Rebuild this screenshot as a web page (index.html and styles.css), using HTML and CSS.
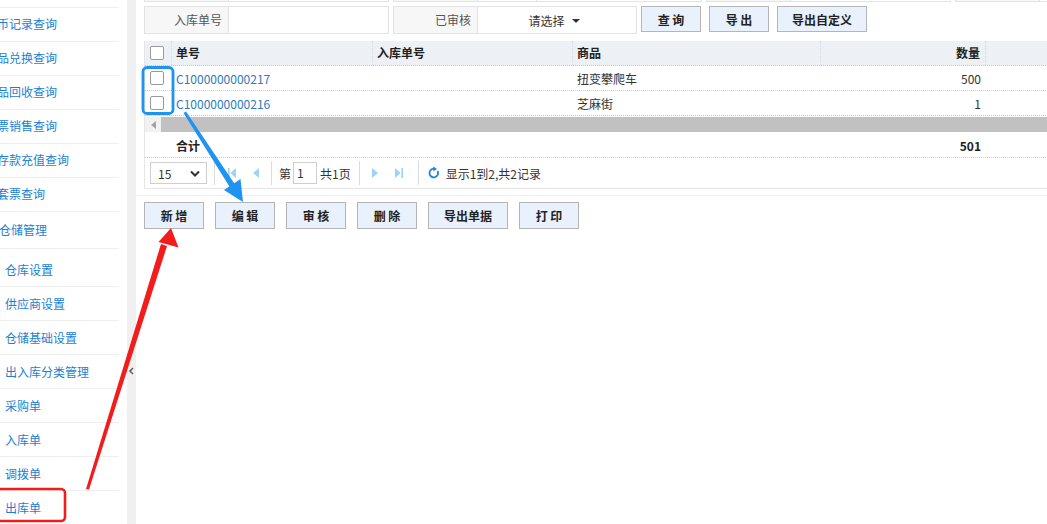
FILE: index.html
```html
<!DOCTYPE html>
<html lang="zh-CN">
<head>
<meta charset="utf-8">
<title>出库单</title>
<link rel="stylesheet" href="styles.css">
</head>
<body>
<div class="layout">
  <aside class="sidebar">
    <ul class="menu">
      <li class="menu-ghost"></li>
      <li class="menu-item cut">币记录查询</li>
      <li class="menu-item cut">品兑换查询</li>
      <li class="menu-item cut">品回收查询</li>
      <li class="menu-item cut">票销售查询</li>
      <li class="menu-item cut">存款充值查询</li>
      <li class="menu-item cut">套票查询</li>
      <li class="menu-group">仓储管理</li>
      <li class="submenu-wrap">
        <ul class="submenu">
          <li class="sub-item">仓库设置</li>
          <li class="sub-item">供应商设置</li>
          <li class="sub-item">仓储基础设置</li>
          <li class="sub-item">出入库分类管理</li>
          <li class="sub-item">采购单</li>
          <li class="sub-item">入库单</li>
          <li class="sub-item">调拨单</li>
          <li class="sub-item">出库单</li>
        </ul>
      </li>
    </ul>
  </aside>
  <div class="splitter">
    <svg class="collapse" width="5" height="8" viewBox="0 0 5 8"><polyline points="4,1 1,4 4,7" fill="none" stroke="#666" stroke-width="1.6"/></svg>
  </div>
  <main class="main">
    <div class="form">
      <div class="form-row">
        <div class="field"><span class="f-label">&nbsp;</span><span class="f-input w160"></span></div>
        <div class="field"><span class="f-label">&nbsp;</span><span class="f-input w59"></span><span class="f-input w165"></span></div>
        <div class="field"><span class="f-label">&nbsp;</span><span class="f-input w160"></span></div>
        <div class="field"><span class="f-label">&nbsp;</span><span class="f-input w160"></span></div>
      </div>
      <div class="form-row">
        <div class="field"><span class="f-label">入库单号</span><span class="f-input w160"></span></div>
        <div class="field"><span class="f-label">已审核</span><span class="f-select"><span>请选择</span><i class="caret"></i></span></div>
        <button class="btn w60">查 询</button>
        <button class="btn w60 ml4">导 出</button>
        <button class="btn w90 ml4">导出自定义</button>
      </div>
    </div>

    <div class="grid">
      <div class="g-row g-head">
        <div class="g-cell cb"><span class="checkbox"></span></div>
        <div class="g-cell">单号</div>
        <div class="g-cell">入库单号</div>
        <div class="g-cell">商品</div>
        <div class="g-cell num">数量</div>
        <div class="g-cell rest"></div>
      </div>
      <div class="g-row">
        <div class="g-cell cb"><span class="checkbox"></span></div>
        <div class="g-cell link">C1000000000217</div>
        <div class="g-cell"></div>
        <div class="g-cell">扭变攀爬车</div>
        <div class="g-cell num">500</div>
        <div class="g-cell rest"></div>
      </div>
      <div class="g-row">
        <div class="g-cell cb"><span class="checkbox"></span></div>
        <div class="g-cell link">C1000000000216</div>
        <div class="g-cell"></div>
        <div class="g-cell">芝麻街</div>
        <div class="g-cell num">1</div>
        <div class="g-cell rest"></div>
      </div>
      <div class="hscroll">
        <span class="hs-arrow"><svg width="5" height="8" viewBox="0 0 5 8"><path d="M5 0 L0 4 L5 8Z" fill="#a3a3a3"/></svg></span>
        <span class="hs-thumb"></span>
      </div>
      <div class="g-row g-foot">
        <div class="g-cell cb"></div>
        <div class="g-cell">合计</div>
        <div class="g-cell"></div>
        <div class="g-cell"></div>
        <div class="g-cell num">501</div>
        <div class="g-cell rest"></div>
      </div>
      <div class="pager">
        <div class="page-size"><span>15</span><svg width="10" height="7" viewBox="0 0 10 7"><polyline points="1,1.5 5,5.5 9,1.5" fill="none" stroke="#333" stroke-width="2"/></svg></div>
        <span class="pager-sep"></span>
        <span class="pager-btn ml5"><svg width="8" height="10" viewBox="0 0 8 10"><rect x="0" y="0" width="1.6" height="10" fill="#9fd2f5"/><path d="M8 0 L2.4 5 L8 10Z" fill="#9fd2f5"/></svg></span>
        <span class="pager-btn"><svg width="6" height="10" viewBox="0 0 6 10"><path d="M6 0 L0 5 L6 10Z" fill="#9fd2f5"/></svg></span>
        <span class="pager-sep ml3"></span>
        <span class="pager-text ml7">第</span>
        <span class="page-input">1</span>
        <span class="pager-text ml3">共1页</span>
        <span class="pager-sep ml8"></span>
        <span class="pager-btn ml3"><svg width="6" height="10" viewBox="0 0 6 10"><path d="M0 0 L6 5 L0 10Z" fill="#9fd2f5"/></svg></span>
        <span class="pager-btn"><svg width="8" height="10" viewBox="0 0 8 10"><path d="M0 0 L5.6 5 L0 10Z" fill="#9fd2f5"/><rect x="6.4" y="0" width="1.6" height="10" fill="#9fd2f5"/></svg></span>
        <span class="pager-sep ml4"></span>
        <span class="pager-btn ml3"><svg width="12" height="12" viewBox="0 0 12 12"><path d="M9.6 4 A4.3 4.3 0 1 1 6 1.7" fill="none" stroke="#1f86d6" stroke-width="1.8"/><path d="M5.2 -0.6 L9 1.9 L5.4 4.3Z" fill="#1f86d6"/></svg></span>
        <span class="pager-text">显示1到2,共2记录</span>
      </div>
    </div>

    <div class="toolbar">
      <button class="btn w60">新 增</button>
      <button class="btn w60">编 辑</button>
      <button class="btn w60">审 核</button>
      <button class="btn w60">删 除</button>
      <button class="btn w80">导出单据</button>
      <button class="btn w60">打 印</button>
    </div>
  </main>
</div>

<svg class="overlay" width="1047" height="524" viewBox="0 0 1047 524">
  <rect x="-3" y="489" width="68" height="32" rx="4" fill="none" stroke="#f21c1c" stroke-width="2.6"/>
  <polygon points="86,489 89,489.6 167,246 161,244" fill="#f21c1c"/>
  <polygon points="171,228 178.5,247.5 158.5,242" fill="#f21c1c"/>
  <rect x="143" y="67.5" width="30" height="46" rx="4" fill="none" stroke="#1e93f2" stroke-width="2.8"/>
  <polygon points="183.5,113 186,111.6 236,186 231,189" fill="#1e93f2"/>
  <polygon points="243,202 224,190 240.5,179" fill="#1e93f2"/>
</svg>
</body>
</html>
```

FILE: styles.css
```css
* { box-sizing: border-box; }
html, body { margin: 0; padding: 0; }
body {
  width: 1047px;
  height: 524px;
  overflow: hidden;
  position: relative;
  background: #fff;
  font-family: "Noto Sans CJK SC", "Microsoft YaHei", sans-serif;
  font-size: 12px;
  color: #333;
}
.layout { display: flex; height: 524px; }

/* sidebar */
.sidebar {
  width: 127px;
  flex-shrink: 0;
  padding-right: 8px;
  overflow: hidden;
  background: #fff;
}
.menu, .submenu { list-style: none; margin: 0; padding: 0; }
.menu-ghost { height: 8px; border-bottom: 1px solid #efefef; }
.menu-item {
  height: 34px;
  line-height: 31px;
  border-bottom: 1px solid #efefef;
  color: #1b7fd4;
  white-space: nowrap;
}
.menu-item.cut { text-indent: -3px; }
.menu-group {
  height: 37px;
  line-height: 36px;
  border-bottom: 1px solid #efefef;
  color: #1b7fd4;
  text-indent: -1px;
  white-space: nowrap;
}
.submenu { padding-top: 4px; }
.sub-item {
  height: 34px;
  line-height: 33px;
  border-bottom: 1px solid #efefef;
  color: #1b7fd4;
  padding-left: 5px;
  white-space: nowrap;
}

.splitter {
  width: 9px;
  flex-shrink: 0;
  background: #f0f0f0;
  display: flex;
  justify-content: center;
  align-items: flex-start;
  padding-top: 367px;
}

/* main */
.main {
  flex: 1;
  min-width: 0;
  overflow: hidden;
  padding-left: 8px;
}
.form { margin-top: -26px; display: flex; flex-direction: column; gap: 4px; }
.form-row { display: flex; gap: 4px; height: 28px; align-items: flex-start; }
.field { display: flex; height: 28px; flex-shrink: 0; }
.f-label {
  width: 85px;
  height: 28px;
  background: #f7f7f7;
  border: 1px solid #e3e3e3;
  color: #555;
  text-align: right;
  padding-right: 6px;
  line-height: 26px;
}
.f-input, .f-select {
  height: 28px;
  border: 1px solid #e3e3e3;
  border-left: none;
  background: #fff;
}
.w160 { width: 160px; }
.w59 { width: 59px; }
.w165 { width: 165px; }
.f-select {
  width: 159px;
  display: flex;
  align-items: center;
  justify-content: center;
  gap: 7px;
  color: #333;
  padding-right: 6px;
}
.caret {
  width: 0;
  height: 0;
  border-left: 4px solid transparent;
  border-right: 4px solid transparent;
  border-top: 4px solid #333;
  margin-top: 1px;
}

.btn {
  height: 26px;
  flex-shrink: 0;
  background: #e9f1fc;
  border: 1px solid #b5b5b5;
  border-radius: 0;
  font-family: inherit;
  font-size: 12px;
  font-weight: bold;
  color: #222;
  padding: 0;
  white-space: pre;
  cursor: pointer;
}
.w60 { width: 60px; }
.w80 { width: 80px; }
.w90 { width: 90px; }
.ml4 { margin-left: 4px; }

/* grid */
.grid {
  margin-top: 7px;
  border-left: 1px solid #e6e6e6;
  width: 1100px;
}
.g-row {
  display: grid;
  grid-template-columns: 27px 201px 200px 248px 165px 1fr;
  height: 25px;
  border-bottom: 1px dotted #c8c8c8;
  align-items: center;
}
.g-head { background: #edf1f6; height: 25px; }
.g-head .g-cell { border-right: 1px dotted #d3d9e1; font-weight: bold; color: #222; height: 24px; line-height: 24px; }
.g-head .g-cell.rest { border-right: none; }
.g-cell { padding: 0 4px; white-space: nowrap; overflow: hidden; }
.g-cell.num { text-align: right; padding-right: 5px; }
.g-cell.cb { padding: 0 0 0 5px; display: flex; align-items: center; }
.g-cell.link { color: #2d7bc0; }
.checkbox {
  width: 14px;
  height: 14px;
  border: 1px solid #9a9a9a;
  border-radius: 2px;
  background: #fff;
  display: block;
}

.hscroll {
  margin-top: 1px;
  height: 15px;
  display: flex;
}
.hs-arrow {
  width: 16px;
  background: #f1f1f1;
  display: flex;
  align-items: center;
  justify-content: center;
}
.hs-thumb { flex: 1; background: #c1c1c1; }

.g-foot { margin-top: 1px; height: 25px; }
.g-foot .g-cell { font-weight: bold; color: #222; }

.pager {
  height: 31px;
  border-bottom: 1px solid #e6e6e6;
  display: flex;
  align-items: center;
  padding-left: 5px;
}
.page-size {
  width: 57px;
  height: 22px;
  border: 1px solid #cfcfcf;
  display: flex;
  align-items: center;
  justify-content: space-between;
  padding: 0 6px 0 7px;
  color: #333;
}
.pager-sep {
  width: 1px;
  height: 24px;
  background: #dcdcdc;
  margin-left: 7px;
}
.pager-btn {
  width: 24px;
  height: 22px;
  display: flex;
  align-items: center;
  justify-content: center;
}
.pager-text { color: #333; white-space: nowrap; }
.page-input {
  width: 24px;
  height: 22px;
  border: 1px solid #cfcfcf;
  margin-left: 2px;
  padding-left: 3px;
  line-height: 20px;
  color: #333;
}
.ml3 { margin-left: 3px; }
.ml5 { margin-left: 5px; }
.ml7 { margin-left: 7px; }
.ml8 { margin-left: 8px; }

.toolbar {
  margin-top: 6px;
  margin-left: -8px;
  padding: 6px 0 0 8px;
  border-top: 1px solid #f0f0f0;
  display: flex;
  gap: 11px;
}
.toolbar .btn { height: 27px; }

.overlay {
  position: absolute;
  left: 0;
  top: 0;
  pointer-events: none;
}
```
